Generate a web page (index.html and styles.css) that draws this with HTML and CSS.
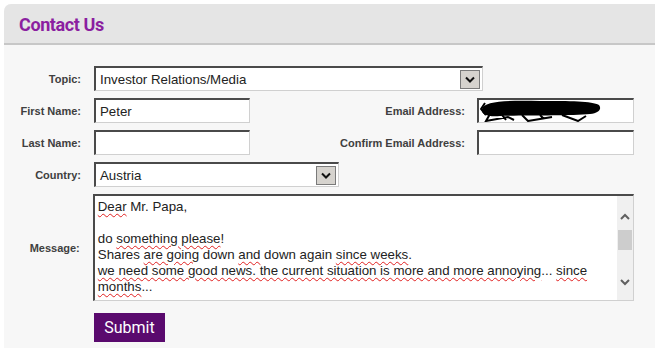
FILE: index.html
```html
<!DOCTYPE html>
<html lang="en">
<head>
    <meta charset="UTF-8">
    <title>Contact Us</title>
    <link rel="stylesheet" href="styles.css">
</head>
<body>
    <div class="panel">
        <div class="panel-head">Contact Us</div>
        <div class="form">
            <div class="row">
                <label class="label">Topic:</label>
                <div class="field select select-wide">
                    <span class="field-text">Investor Relations/Media</span>
                    <span class="arrow"><svg width="10" height="7" viewBox="0 0 10 7"><path d="M1 1.5 L5 5.5 L9 1.5" fill="none" stroke="#111" stroke-width="2"/></svg></span>
                </div>
            </div>
            <div class="row">
                <label class="label">First Name:</label>
                <div class="field input"><span class="field-text">Peter</span></div>
                <label class="label label-right">Email Address:</label>
                <div class="field input input-mail">
                    <svg class="scribble" width="122" height="22" viewBox="0 0 122 22">
                        <path d="M2 9 C3 1, 30 0, 60 1 C90 1, 112 1, 119 5 C122 9, 119 13, 110 14 C90 16, 50 15, 20 16 C6 17, 1 14, 2 9 Z" fill="#000"/>
                        <path d="M5 3 L1 9 L6 15 M10 14 L6 21 L28 17 L34 20 M42 15 L48 21 L72 17 M82 15 L98 21 L106 16 M22 15 L26 20 M60 15 L64 19" stroke="#000" stroke-width="2" fill="none"/>
                    </svg>
                </div>
            </div>
            <div class="row">
                <label class="label">Last Name:</label>
                <div class="field input"></div>
                <label class="label label-right">Confirm Email Address:</label>
                <div class="field input input-mail"></div>
            </div>
            <div class="row">
                <label class="label">Country:</label>
                <div class="field select select-country">
                    <span class="field-text">Austria</span>
                    <span class="arrow"><svg width="10" height="7" viewBox="0 0 10 7"><path d="M1 1.5 L5 5.5 L9 1.5" fill="none" stroke="#111" stroke-width="2"/></svg></span>
                </div>
            </div>
            <div class="row row-message">
                <label class="label">Message:</label>
                <div class="field textarea">
                    <div class="textarea-text">
                        <div><span class="typo">Dear</span> Mr. Papa,</div>
                        <div>&nbsp;</div>
                        <div>do <span class="typo">something please</span>!</div>
                        <div>Shares <span class="typo">are going</span> down <span class="typo">and</span> down again <span class="typo">since weeks</span>.</div>
                        <div><span class="typo">we need some good news. the current situation is more and more annoying</span>... <span class="typo">since</span></div>
                        <div><span class="typo">months</span>...</div>
                    </div>
                    <div class="scrollbar">
                        <svg width="12" height="8" viewBox="0 0 12 8"><path d="M2 6 L6 2 L10 6" fill="none" stroke="#606060" stroke-width="2"/></svg>
                        <div class="thumb"></div>
                        <div class="track"></div>
                        <svg width="12" height="8" viewBox="0 0 12 8"><path d="M2 2 L6 6 L10 2" fill="none" stroke="#606060" stroke-width="2"/></svg>
                    </div>
                </div>
            </div>
            <div class="row row-submit">
                <button class="submit">Submit</button>
            </div>
        </div>
    </div>
</body>
</html>
```

FILE: styles.css
```css
body {
    margin: 0;
    padding: 4px 0 0 4px;
    background-color: #fff;
    font-family: "Liberation Sans", Arial, sans-serif;
}
.panel {
    background-color: #f7f7f7;
    border-top-left-radius: 7px;
    overflow: hidden;
    height: 344px;
}
.panel-head {
    height: 39px;
    line-height: 41px;
    padding-left: 15px;
    background-color: #e5e5e5;
    border-bottom: 2px solid #c7c7c7;
    color: #8b1fa0;
    font-family: Roboto, "Noto Sans", sans-serif;
    font-weight: bold;
    font-size: 18px;
    letter-spacing: -0.4px;
}
.form {
    padding: 21px 21px 0 0;
}
.row {
    display: flex;
    align-items: center;
    height: 25px;
    margin-bottom: 7px;
}
.label {
    width: 77px;
    margin-right: 13px;
    text-align: right;
    font-size: 11px;
    font-weight: bold;
    color: #404040;
}
.label-right {
    flex: 1;
    width: auto;
    margin-right: 12px;
}
.field {
    box-sizing: border-box;
    height: 25px;
    background-color: #fff;
    border-top: 2px solid #4a4a4a;
    border-left: 2px solid #4a4a4a;
    border-right: 1px solid #d0d0d0;
    border-bottom: 1px solid #d0d0d0;
    display: flex;
    align-items: center;
    font-size: 13.3px;
    color: #222;
}
.field-text {
    flex: 1;
    padding-left: 4px;
    white-space: nowrap;
}
.input {
    width: 156px;
}
.input-mail {
    width: 157px;
}
.scribble {
    margin-left: 1px;
}
.select-wide {
    width: 389px;
}
.select-country {
    width: 245px;
}
.arrow {
    box-sizing: border-box;
    width: 20px;
    height: 19px;
    margin-right: 2px;
    background-color: #d6d3ce;
    border: 1px solid #7a7a7a;
    display: flex;
    align-items: center;
    justify-content: center;
}
.row-message {
    height: 107px;
    margin-bottom: 12px;
    align-items: stretch;
}
.row-message .label {
    align-self: center;
}
.textarea {
    width: 550px;
    height: 107px;
    align-items: stretch;
}
.textarea-text {
    flex: 1;
    padding: 3px 3px 0 3px;
    line-height: 16px;
    white-space: nowrap;
    overflow: hidden;
}
.typo {
    text-decoration: underline wavy #e02020;
    text-decoration-thickness: 1px;
    text-underline-offset: 2px;
}
.scrollbar {
    width: 16px;
    background-color: #f0f0f0;
    display: flex;
    flex-direction: column;
    align-items: center;
    padding: 17px 0 14px;
}
.thumb {
    width: 14px;
    height: 20px;
    margin-top: 9px;
    background-color: #cdcdcd;
}
.track {
    flex: 1;
}
.row-submit {
    height: 29px;
    padding-left: 90px;
}
.submit {
    width: 71px;
    height: 29px;
    border: none;
    padding: 0;
    background-color: #5a0a6e;
    color: #fff;
    font-family: Roboto, "Noto Sans", sans-serif;
    font-size: 16px;
    font-weight: 400;
}
```
